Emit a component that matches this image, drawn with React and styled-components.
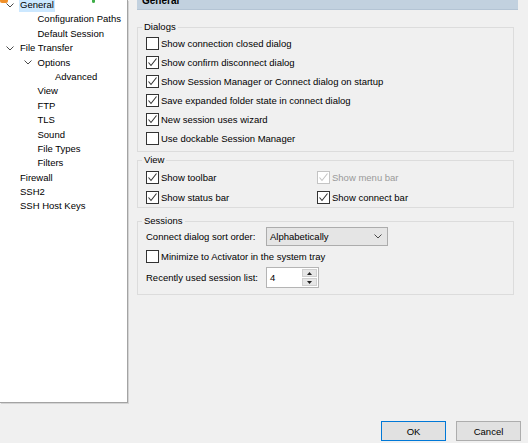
import React from "react";
import styled, { createGlobalStyle } from "styled-components";

const Global = createGlobalStyle`
  html, body { margin: 0; padding: 0; }
  body {
    background: #f0f0f0;
    font-family: "Liberation Sans", Arial, sans-serif;
    font-size: 9.5px;
    color: #000;
    overflow: hidden;
  }
  * { box-sizing: border-box; }
`;

const Window = styled.div`
  width: 528px;
  height: 443px;
  display: flex;
  flex-direction: column;
  overflow: hidden;
`;

const Main = styled.div`
  display: flex;
  height: 403px;
`;

const Tree = styled.div`
  position: relative;
  width: 128px;
  height: 403px;
  background: #fff;
  border-right: 1px solid #a3a3a3;
  border-bottom: 1px solid #a3a3a3;
  box-shadow: 1px 1px 0 #d4d4d4;
  overflow: hidden;
`;

const TreeList = styled.div`
  margin-top: -2.2px;
`;

const TreeRow = styled.div`
  display: flex;
  align-items: center;
  height: 14.4px;
  padding-left: ${(p) => 6 + p.$level * 17.5}px;
  white-space: nowrap;
`;

const Expander = styled.span`
  width: 14px;
  flex: none;
  display: flex;
  align-items: center;
`;

const TreeLabel = styled.span`
  line-height: 14px;
  height: 14px;
  padding: 0 1px;
  margin-left: -1px;
  background: ${(p) => (p.$selected ? "#cce8ff" : "transparent")};
`;

const Peek = styled.span`
  position: absolute;
  top: 0;
  left: ${(p) => p.$x}px;
  width: ${(p) => p.$w}px;
  height: 3px;
  background: ${(p) => p.$c};
  border-radius: 0 0 2px 2px;
`;

const Panel = styled.div`
  margin-left: 9px;
  width: 381px;
  display: flex;
  flex-direction: column;
`;

const Header = styled.div`
  margin-top: -10px;
  height: 20px;
  padding: 1px 0 0 5px;
  line-height: 20px;
  background: #c2d1df;
  border-bottom: 1px solid #b4c4d4;
  font-weight: bold;
  font-size: 10px;
`;

const Group = styled.fieldset`
  margin: ${(p) => p.$mt}px 4px 0 0;
  padding: ${(p) => p.$pt}px 0 ${(p) => p.$pb}px 8px;
  border: 1px solid #dcdcdc;
  min-width: 0;
`;

const Legend = styled.legend`
  margin-left: -4px;
  padding: 0 2px;
  line-height: 12px;
`;

const CheckRow = styled.div`
  display: flex;
  align-items: center;
  gap: 2px;
  height: ${(p) => p.$h || 19}px;
  color: ${(p) => (p.$disabled ? "#9a9a9a" : "#000")};
  white-space: nowrap;
`;

const Box = styled.span`
  width: 13px;
  height: 13px;
  flex: none;
  border: 1px solid ${(p) => (p.$disabled ? "#c4c4c4" : "#333")};
  background: #fff;
  display: flex;
  align-items: center;
  justify-content: center;
`;

const ViewGrid = styled.div`
  display: grid;
  grid-template-columns: 171px 1fr;
  grid-auto-rows: 19.5px;
`;

const SessionGrid = styled.div`
  display: grid;
  grid-template-columns: 120px auto;
  grid-template-rows: 19px 21px 21px;
  align-items: center;
`;

const FullRow = styled.div`
  grid-column: 1 / -1;
`;

const FieldLabel = styled.span`
  white-space: nowrap;
`;

const Combo = styled.div`
  width: 122px;
  height: 19px;
  background: #e5e5e5;
  border: 1px solid #acacac;
  display: flex;
  align-items: center;
  justify-content: space-between;
  padding: 0 5px 0 3px;
`;

const Spin = styled.div`
  width: 53px;
  height: 21px;
  background: #fff;
  border: 1px solid #b4b4b4;
  display: flex;
  align-items: stretch;
`;

const SpinValue = styled.div`
  flex: 1;
  display: flex;
  align-items: center;
  padding-left: 3px;
`;

const SpinButtons = styled.div`
  width: 16px;
  display: flex;
  flex-direction: column;
  gap: 1px;
  padding: 1px 1px 1px 0;
`;

const SpinButton = styled.div`
  flex: 1;
  background: #e6e6e6;
  border: 1px solid #cfcfcf;
  display: flex;
  align-items: center;
  justify-content: center;
`;

const Footer = styled.div`
  display: flex;
  justify-content: flex-end;
  gap: 10px;
  padding: 18px 7px 0 0;
`;

const Button = styled.div`
  width: 65px;
  height: 20px;
  background: #e1e1e1;
  border: 1px solid ${(p) => (p.$default ? "#0078d7" : "#adadad")};
  display: flex;
  align-items: center;
  justify-content: center;
`;

const Chevron = () => (
  <svg width="8" height="5" viewBox="0 0 8 5">
    <polyline points="0.5,0.5 4,4 7.5,0.5" fill="none" stroke="#4a4a4a" strokeWidth="1" />
  </svg>
);

const Check = ({ color }) => (
  <svg width="11" height="11" viewBox="0 0 11 11">
    <polyline points="1.5,5.5 4,8.5 9.5,1.5" fill="none" stroke={color} strokeWidth="1.1" />
  </svg>
);

const Checkbox = ({ checked, disabled, children, h }) => (
  <CheckRow $disabled={disabled} $h={h}>
    <Box $disabled={disabled}>{checked && <Check color={disabled ? "#c4c4c4" : "#333"} />}</Box>
    <span>{children}</span>
  </CheckRow>
);

const treeItems = [
  { label: "General", level: 0, exp: true, selected: true },
  { label: "Configuration Paths", level: 1 },
  { label: "Default Session", level: 1 },
  { label: "File Transfer", level: 0, exp: true },
  { label: "Options", level: 1, exp: true },
  { label: "Advanced", level: 2 },
  { label: "View", level: 1 },
  { label: "FTP", level: 1 },
  { label: "TLS", level: 1 },
  { label: "Sound", level: 1 },
  { label: "File Types", level: 1 },
  { label: "Filters", level: 1 },
  { label: "Firewall", level: 0 },
  { label: "SSH2", level: 0 },
  { label: "SSH Host Keys", level: 0 },
];

export default function App() {
  return (
    <>
      <Global />
      <Window>
        <Main>
          <Tree>
            <Peek $x={0} $w={8} $c="#f0902a" />
            <Peek $x={92} $w={3} $c="#3fae49" />
            <TreeList>
              {treeItems.map((it) => (
                <TreeRow key={it.label} $level={it.level}>
                  <Expander>{it.exp && <Chevron />}</Expander>
                  <TreeLabel $selected={it.selected}>{it.label}</TreeLabel>
                </TreeRow>
              ))}
            </TreeList>
          </Tree>
          <Panel>
            <Header>General</Header>
            <Group $mt={11} $pt={1} $pb={3}>
              <Legend>Dialogs</Legend>
              <Checkbox>Show connection closed dialog</Checkbox>
              <Checkbox checked>Show confirm disconnect dialog</Checkbox>
              <Checkbox checked>Show Session Manager or Connect dialog on startup</Checkbox>
              <Checkbox checked>Save expanded folder state in connect dialog</Checkbox>
              <Checkbox checked>New session uses wizard</Checkbox>
              <Checkbox>Use dockable Session Manager</Checkbox>
            </Group>
            <Group $mt={2} $pt={2} $pb={0}>
              <Legend>View</Legend>
              <ViewGrid>
                <Checkbox checked h={19.5}>Show toolbar</Checkbox>
                <Checkbox checked disabled h={19.5}>Show menu bar</Checkbox>
                <Checkbox checked h={19.5}>Show status bar</Checkbox>
                <Checkbox checked h={19.5}>Show connect bar</Checkbox>
              </ViewGrid>
            </Group>
            <Group $mt={7} $pt={0} $pb={6}>
              <Legend>Sessions</Legend>
              <SessionGrid>
                <FieldLabel>Connect dialog sort order:</FieldLabel>
                <Combo>
                  <span>Alphabetically</span>
                  <Chevron />
                </Combo>
                <FullRow>
                  <Checkbox h={21}>Minimize to Activator in the system tray</Checkbox>
                </FullRow>
                <FieldLabel>Recently used session list:</FieldLabel>
                <Spin>
                  <SpinValue>4</SpinValue>
                  <SpinButtons>
                    <SpinButton>
                      <svg width="5" height="3" viewBox="0 0 5 3"><polygon points="0,3 2.5,0 5,3" fill="#222" /></svg>
                    </SpinButton>
                    <SpinButton>
                      <svg width="5" height="3" viewBox="0 0 5 3"><polygon points="0,0 2.5,3 5,0" fill="#222" /></svg>
                    </SpinButton>
                  </SpinButtons>
                </Spin>
              </SessionGrid>
            </Group>
          </Panel>
        </Main>
        <Footer>
          <Button $default>OK</Button>
          <Button>Cancel</Button>
        </Footer>
      </Window>
    </>
  );
}
